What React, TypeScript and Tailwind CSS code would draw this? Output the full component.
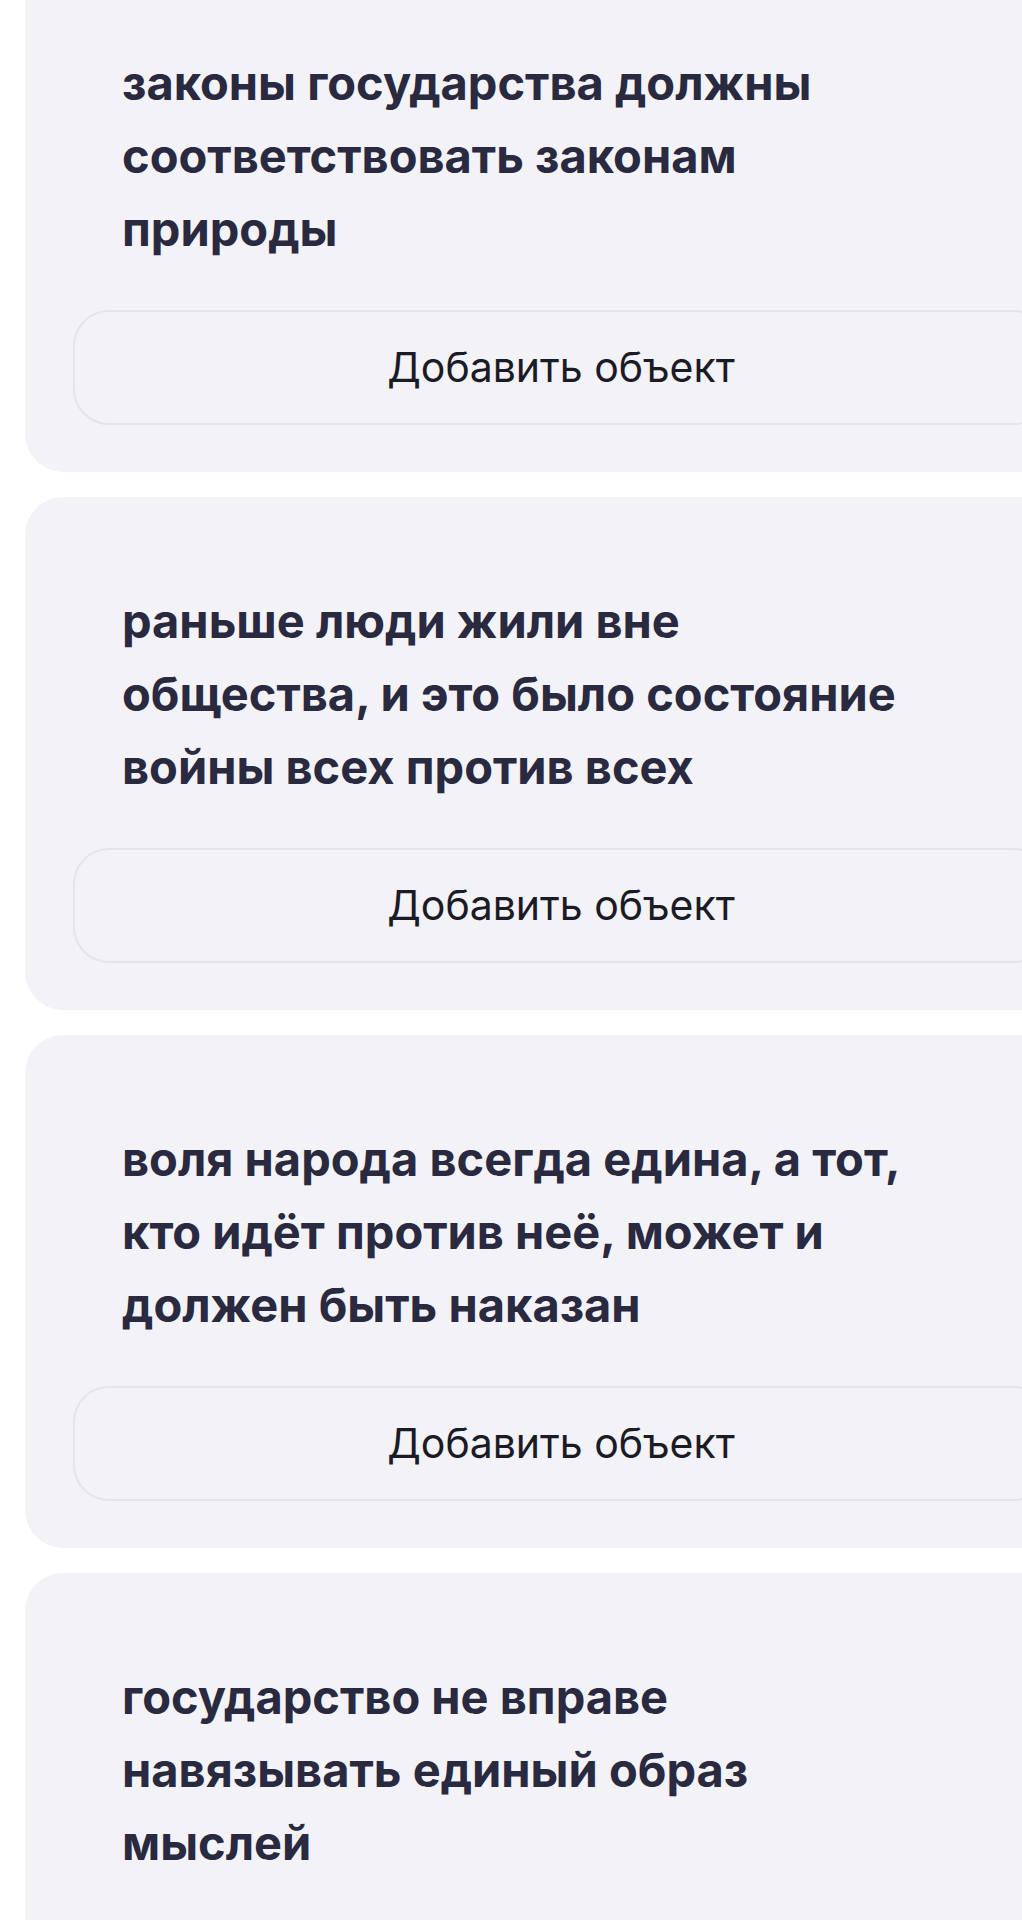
import React from "react";

const statements: string[] = [
  "законы государства должны соответствовать законам природы",
  "раньше люди жили вне общества, и это было состояние войны всех против всех",
  "воля народа всегда едина, а тот, кто идёт против неё, может и должен быть наказан",
  "государство не вправе навязывать единый образ мыслей",
];

const StatementCard: React.FC<{ text: string }> = ({ text }) => {
  return (
    <div className="w-[1072px] shrink-0 rounded-[38px] bg-[#f2f2f7] pt-[87px] pb-[47px]">
      <p className="ml-[97px] w-[781px] text-[47px] font-bold leading-[73px] text-[#29293f]">
        {text}
      </p>
      <button
        type="button"
        className="mx-[48px] mt-[45px] flex h-[115px] w-[976px] items-center justify-center rounded-[36px] border-2 border-[#e4e4ec] bg-[#f2f2f7] text-[41px] font-normal text-[#1b1b26]"
      >
        Добавить объект
      </button>
    </div>
  );
};

const App: React.FC = () => {
  return (
    <div
      className="min-h-screen w-full overflow-hidden bg-white"
      style={{ fontFamily: "Inter, 'Noto Sans', 'Liberation Sans', sans-serif" }}
    >
      <div className="-mt-[41px] flex flex-col gap-[25px] pl-[25px]">
        {statements.map((s, i) => (
          <StatementCard key={i} text={s} />
        ))}
      </div>
    </div>
  );
};

export default App;
